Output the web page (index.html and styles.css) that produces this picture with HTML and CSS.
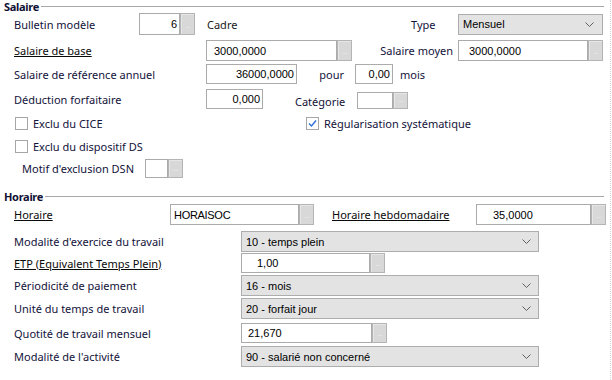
FILE: index.html
```html
<!DOCTYPE html>
<html lang="fr">
<head>
<meta charset="utf-8">
<link rel="stylesheet" href="styles.css">
</head>
<body>
<div class="page">
  <div class="legend"><span class="legend-title">Salaire</span><span class="legend-line"></span></div>

  <div class="row r1">
    <span class="lbl w125">Bulletin modèle</span>
    <span class="field"><span class="box w41 right">6</span><span class="btn">...</span></span>
    <span class="plain cadre">Cadre</span>
    <span class="lbl w47">Type</span>
    <span class="select w145 sel-sm"><span>Mensuel</span><svg class="chev" width="9" height="5" viewBox="0 0 9 5"><polyline points="0.5,0.5 4.5,4.5 8.5,0.5" fill="none" stroke="#606060" stroke-width="1"/></svg></span>
  </div>

  <div class="row r2">
    <span class="lbl u w192">Salaire de base</span>
    <span class="field"><span class="box w131 padl8">3000,0000</span><span class="btn">...</span></span>
    <span class="lbl w106 ralign">Salaire moyen</span>
    <span class="field"><span class="box w130 padl11">3000,0000</span><span class="btn">...</span></span>
  </div>

  <div class="row r3">
    <span class="lbl w192">Salaire de référence annuel</span>
    <span class="box w91 right">36000,0000</span>
    <span class="lbl w52 ralign">pour</span>
    <span class="box w38 right ml6">0,00</span>
    <span class="lbl ml7">mois</span>
  </div>

  <div class="row r4">
    <span class="lbl w192">Déduction forfaitaire</span>
    <span class="box w57 right">0,000</span>
    <span class="lbl cat">Catégorie</span>
    <span class="field small"><span class="box w36"></span><span class="btn w14">...</span></span>
  </div>

  <div class="row r5">
    <span class="check w291"><span class="cb"></span><span class="lbl">Exclu du CICE</span></span>
    <span class="check"><span class="cb on"><svg width="11" height="11" viewBox="0 0 11 11"><polyline points="2,5.5 4.5,8 9,2.5" fill="none" stroke="#2d6fd6" stroke-width="1.4"/></svg></span><span class="lbl">Régularisation systématique</span></span>
  </div>

  <div class="row r6">
    <span class="check"><span class="cb"></span><span class="lbl">Exclu du dispositif DS</span></span>
  </div>

  <div class="row r7">
    <span class="lbl w123">Motif d'exclusion DSN</span>
    <span class="field"><span class="box w23"></span><span class="btn">...</span></span>
  </div>

  <div class="legend legend2"><span class="legend-title">Horaire</span><span class="legend-line"></span></div>

  <div class="row h1">
    <span class="lbl u w156">Horaire</span>
    <span class="field"><span class="box w129 padl3">HORAISOC</span><span class="btn">...</span></span>
    <span class="lbl u hebdo">Horaire hebdomadaire</span>
    <span class="field"><span class="box w115 padl17">35,0000</span><span class="btn w16">...</span></span>
  </div>

  <div class="row h2">
    <span class="lbl w227">Modalité d'exercice du travail</span>
    <span class="select w298"><span>10 - temps plein</span><svg class="chev" width="9" height="5" viewBox="0 0 9 5"><polyline points="0.5,0.5 4.5,4.5 8.5,0.5" fill="none" stroke="#606060" stroke-width="1"/></svg></span>
  </div>

  <div class="row h3">
    <span class="lbl u dark w227">ETP (Equivalent Temps Plein)</span>
    <span class="field"><span class="box w129 padl16">1,00</span><span class="btn">...</span></span>
  </div>

  <div class="row h4">
    <span class="lbl w227">Périodicité de paiement</span>
    <span class="select w298"><span>16 - mois</span><svg class="chev" width="9" height="5" viewBox="0 0 9 5"><polyline points="0.5,0.5 4.5,4.5 8.5,0.5" fill="none" stroke="#606060" stroke-width="1"/></svg></span>
  </div>

  <div class="row h5">
    <span class="lbl w227">Unité du temps de travail</span>
    <span class="select w298"><span>20 - forfait jour</span><svg class="chev" width="9" height="5" viewBox="0 0 9 5"><polyline points="0.5,0.5 4.5,4.5 8.5,0.5" fill="none" stroke="#606060" stroke-width="1"/></svg></span>
  </div>

  <div class="row h6">
    <span class="lbl w227">Quotité de travail mensuel</span>
    <span class="field"><span class="box w131 padl7">21,670</span><span class="btn">...</span></span>
  </div>

  <div class="row h7">
    <span class="lbl w227">Modalité de l'activité</span>
    <span class="select w298"><span>90 - salarié non concerné</span><svg class="chev" width="9" height="5" viewBox="0 0 9 5"><polyline points="0.5,0.5 4.5,4.5 8.5,0.5" fill="none" stroke="#606060" stroke-width="1"/></svg></span>
  </div>
</div>
</body>
</html>
```

FILE: styles.css
```css
html, body {
  margin: 0;
  padding: 0;
  background: #ffffff;
}
body {
  font-family: "Noto Sans", "Open Sans", sans-serif;
  font-size: 11px;
  color: #12123a;
}
.page {
  width: 610px;
  height: 380px;
  border-right: 1px dotted #d4d4d4;
  box-sizing: content-box;
}

/* legends */
.legend {
  display: flex;
  align-items: center;
  height: 13px;
  padding: 0 6px 0 4px;
}
.legend-title {
  font-weight: bold;
  color: #101034;
  line-height: 13px;
  letter-spacing: -0.3px;
}
.legend-line {
  flex: 1;
  height: 1px;
  background: #a8a8a8;
  margin-left: 2px;
}
.legend2 {
  margin-top: 12px;
}

/* rows */
.row {
  display: flex;
  align-items: center;
  padding-left: 14px;
}
.r1 { margin-top: 0; height: 22px; }
.r2 { margin-top: 5px; height: 21px; }
.r3 { margin-top: 3px; height: 20px; }
.r4 { margin-top: 5px; height: 20px; }
.r5 { margin-top: 7px; height: 15px; padding-left: 15px; }
.r6 { margin-top: 8px; height: 15px; padding-left: 15px; }
.r7 { margin-top: 5px; height: 19px; padding-left: 22px; }
.h1 { margin-top: 1px; height: 21px; }
.h2 { margin-top: 6px; height: 21px; }
.h3 { margin-top: 1px; height: 20px; }
.h4 { margin-top: 2px; height: 21px; }
.h5 { margin-top: 2px; height: 21px; }
.h6 { margin-top: 4px; height: 20px; }
.h7 { margin-top: 3px; height: 21px; }

.lbl {
  white-space: nowrap;
  flex: none;
}
.u {
  text-decoration: underline;
  color: #0a0a0a;
}
.dark { color: #0a0a0a; }
.plain { color: #1a1a1a; }
.ralign {
  text-align: right;
  padding-right: 5px;
  box-sizing: border-box;
}
.cadre { width: 204px; margin-left: 12px; flex: none; }
.cat { width: 62px; margin-left: 32px; padding-top: 4px; }
.hebdo { width: 144px; margin-left: 18px; }

/* widths */
.w14 { width: 14px; }
.w16 { width: 16px; }
.w23 { width: 23px; }
.w36 { width: 36px; }
.w38 { width: 38px; }
.w41 { width: 41px; }
.w47 { width: 47px; }
.w52 { width: 52px; }
.w57 { width: 57px; }
.w91 { width: 91px; }
.w106 { width: 106px; }
.w115 { width: 115px; }
.w123 { width: 123px; }
.w125 { width: 125px; }
.w129 { width: 129px; }
.w130 { width: 130px; }
.w131 { width: 131px; }
.w145 { width: 145px; }
.w156 { width: 156px; }
.w192 { width: 192px; }
.w227 { width: 227px; }
.w291 { width: 291px; }
.w298 { width: 298px; }
.ml6 { margin-left: 6px; }
.ml7 { margin-left: 7px; }

/* inputs */
.field {
  display: flex;
  height: 100%;
  flex: none;
}
.field.small {
  height: 17px;
  margin-top: 3px;
}
.box {
  display: flex;
  align-items: center;
  height: 100%;
  box-sizing: border-box;
  border: 1px solid #ababab;
  background: #ffffff;
  font-family: "Liberation Sans", Arial, sans-serif;
  font-size: 11px;
  color: #000000;
  flex: none;
  white-space: nowrap;
}
.row > .box { height: 20px; }
.right {
  justify-content: flex-end;
  padding-right: 2px;
}
.padl3 { padding-left: 3px; letter-spacing: -0.3px; }
.padl7 { padding-left: 6px; }
.padl8 { padding-left: 7px; }
.padl11 { padding-left: 10px; }
.padl16 { padding-left: 15px; }
.padl17 { padding-left: 16px; }

.btn {
  width: 15px;
  height: 100%;
  box-sizing: border-box;
  border: 1px solid #b4b4b4;
  background: #d8d8d8;
  box-shadow: inset 1px 1px 0 #e6e6e6;
  color: #f2f2f2;
  font-family: "Liberation Sans", Arial, sans-serif;
  font-size: 8px;
  line-height: 1;
  display: flex;
  align-items: flex-end;
  justify-content: center;
  padding-bottom: 4px;
  flex: none;
  letter-spacing: -0.5px;
}

/* selects */
.select {
  display: flex;
  align-items: center;
  justify-content: space-between;
  height: 21px;
  box-sizing: border-box;
  border: 1px solid #adadad;
  background: #e3e3e3;
  font-family: "Liberation Sans", Arial, sans-serif;
  font-size: 11px;
  color: #000000;
  padding: 0 7px 0 4px;
  flex: none;
}
.sel-sm {
  padding-right: 8px;
}
.chev { flex: none; }

/* checkboxes */
.check {
  display: flex;
  align-items: center;
  flex: none;
}
.cb {
  width: 13px;
  height: 13px;
  box-sizing: border-box;
  border: 1px solid #a6a6a6;
  background: #ffffff;
  margin-right: 5px;
  display: flex;
  align-items: center;
  justify-content: center;
  flex: none;
}
.check .lbl { color: #12123a; }
```
